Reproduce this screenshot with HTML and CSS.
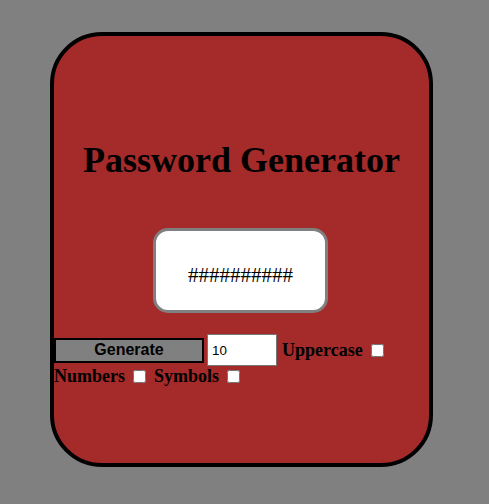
FILE: index.html
```html
<!DOCTYPE html>
<html>
<head>
<meta charset="utf-8">
<link rel="stylesheet" href="styles.css">
</head>
<body>
<div class="card">
  <h1 class="title">Password Generator</h1>
  <div class="output">##########</div>
  <div class="controls">
    <div class="row">
      <button class="gen">Generate</button>
      <input class="len" type="text" value="10">
      <label class="opt">Uppercase</label>
      <input class="chk" type="checkbox">
    </div>
    <div class="row">
      <label class="opt">Numbers</label>
      <input class="chk" type="checkbox">
      <label class="opt">Symbols</label>
      <input class="chk" type="checkbox">
    </div>
  </div>
</div>
</body>
</html>
```
FILE: styles.css
```css
html, body {
  margin: 0;
  padding: 0;
  background: #808080;
}
body {
  font-family: "Liberation Serif", "Times New Roman", serif;
  height: 504px;
  overflow: hidden;
}
.card {
  box-sizing: content-box;
  width: 375px;
  height: 427px;
  margin: 32px 0 0 50px;
  border: 4px solid #000;
  border-radius: 52px;
  background: #a52a2a;
}
.title {
  margin: 103px 0 0;
  font-size: 36px;
  font-weight: bold;
  line-height: normal;
  text-align: center;
  color: #000;
}
.output {
  box-sizing: border-box;
  width: 175px;
  height: 85px;
  margin: 47px auto 0;
  padding-top: 32px;
  background: #fff;
  border: 3px solid #808080;
  border-radius: 15px;
  font-family: "Liberation Serif", serif;
  font-size: 21px;
  line-height: normal;
  text-align: center;
  color: #000;
  transform: translateX(-1px);
}
.controls {
  margin-top: 21px;
}
.row {
  display: flex;
  align-items: center;
}
.gen {
  box-sizing: border-box;
  width: 150px;
  height: 25px;
  margin: 0 3px 0 0;
  padding: 0;
  background: #808080;
  border: 2px solid #000;
  font-family: "Liberation Sans", Arial, sans-serif;
  font-weight: bold;
  font-size: 16px;
  color: #000;
}
.len {
  box-sizing: border-box;
  width: 70px;
  height: 32px;
  margin: 0 5px 0 0;
  padding: 0 4px;
  border: 1px solid #767676;
  background: #fff;
  font-family: "Liberation Sans", Arial, sans-serif;
  font-size: 13.33px;
  color: #000;
}
.opt {
  font-size: 18px;
  font-weight: bold;
  line-height: 21px;
  color: #000;
}
.chk {
  width: 13px;
  height: 13px;
  margin: 0 8px;
}
```
